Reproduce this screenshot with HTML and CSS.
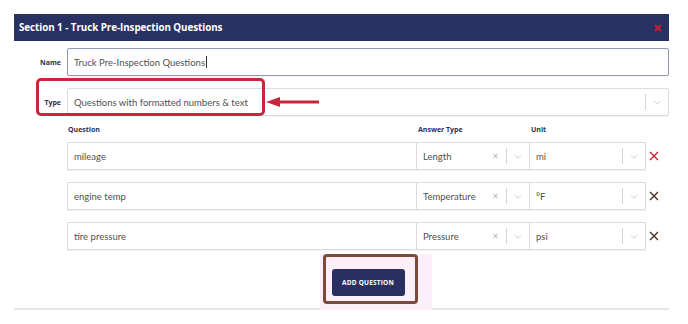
FILE: index.html
```html
<!DOCTYPE html>
<html lang="en">
<head>
    <meta charset="UTF-8">
    <title>Section 1</title>
    <link rel="stylesheet" href="styles.css">
</head>
<body>
    <div class="panel">
        <div class="panel-head">
            <span class="panel-title">Section 1 - Truck Pre-Inspection Questions</span>
            <svg class="panel-close" viewBox="0 0 8 8"><path d="M1 1l6 6M7 1l-6 6" /></svg>
        </div>

        <div class="panel-body">
            <div class="form-row">
                <label class="form-label">Name</label>
                <div class="field field-focus">Truck Pre-Inspection Questions<span class="caret"></span></div>
            </div>

            <div class="form-row type-row">
                <label class="form-label">Type</label>
                <div class="field select">
                    <span class="select-value">Questions with formatted numbers &amp; text</span>
                    <span class="sep"></span>
                    <svg class="chev" viewBox="0 0 10 6"><path d="M1 1l4 4 4-4" /></svg>
                </div>
                <!-- annotation -->
                <div class="mark-red"></div>
                <svg class="mark-arrow" viewBox="0 0 56 12">
                    <path d="M14 6H54" />
                    <path class="head" d="M1 6L15 1V11Z" />
                </svg>
            </div>

            <div class="q-grid q-head">
                <span>Question</span>
                <span>Answer Type</span>
                <span>Unit</span>
                <span></span>
            </div>

            <div class="q-list" id="questions"></div>

            <div class="add-wrap">
                <div class="mark-pink"></div>
                <button class="add-btn">ADD QUESTION</button>
                <div class="mark-brown"></div>
            </div>
        </div>
        <div class="panel-foot"></div>
    </div>

    <script>
        const questions = [
            { q: 'mileage', type: 'Length', unit: 'mi', hot: true },
            { q: 'engine temp', type: 'Temperature', unit: '°F' },
            { q: 'tire pressure', type: 'Pressure', unit: 'psi' }
        ]

        const list = document.getElementById('questions')
        const chev = '<span class="sep"></span><svg class="chev" viewBox="0 0 10 6"><path d="M1 1l4 4 4-4" /></svg>'
        const cross = '<svg viewBox="0 0 10 10"><path d="M1 1l8 8M9 1l-8 8" /></svg>'

        questions.forEach((item) => {
            const row = document.createElement('div')
            row.className = 'q-grid q-row'
            row.innerHTML =
                '<div class="field">' + item.q + '</div>' +
                '<div class="field select"><span class="select-value">' + item.type + '</span><span class="clear">&#x2715;</span>' + chev + '</div>' +
                '<div class="field select"><span class="select-value">' + item.unit + '</span>' + chev + '</div>' +
                '<span class="remove' + (item.hot ? ' remove-hot' : '') + '">' + cross + '</span>'
            list.appendChild(row)
        })
    </script>
</body>
</html>
```

FILE: styles.css
```css
* {
    margin: 0;
    padding: 0;
    box-sizing: border-box;
}

body {
    font-family: 'Lato', 'Open Sans', sans-serif;
    background-color: #fff;
    color: #444;
    width: 688px;
    height: 324px;
    overflow: hidden;
}

/* 面板 */
.panel {
    margin: 14px 0 0 14px;
    width: 655px;
}

.panel-head {
    height: 27px;
    background-color: #283262;
    display: flex;
    align-items: center;
    justify-content: space-between;
    padding: 0 6px 0 5px;
}

.panel-title {
    font-family: 'Open Sans', sans-serif;
    font-weight: 700;
    font-size: 9.8px;
    color: #fff;
    letter-spacing: -0.05px;
}

.panel-close {
    width: 8px;
    height: 8px;
    margin-right: 1px;
    fill: none;
    stroke: #c4203a;
    stroke-width: 2;
}

.panel-body {
    padding: 7px 0 12px 0;
}

/* 表单行 */
.form-row {
    display: flex;
    align-items: center;
    position: relative;
}

.type-row {
    margin-top: 12px;
}

.form-label {
    width: 53px;
    padding-right: 6px;
    text-align: right;
    font-family: 'Open Sans', sans-serif;
    font-weight: 700;
    font-size: 7px;
    color: #2a3058;
}

.field {
    height: 28px;
    flex: 1;
    display: flex;
    align-items: center;
    padding-left: 6px;
    border: 1px solid #dcdcdc;
    border-radius: 2px;
    background-color: #fff;
    font-size: 9.5px;
    color: #505050;
    box-shadow: 0 1px 1px rgba(0, 0, 0, 0.05);
}

.field-focus {
    border-color: #8f98b4;
}

.caret {
    width: 1px;
    height: 12px;
    background-color: #333;
    margin-left: 1px;
}

.select-value {
    flex: 1;
    white-space: nowrap;
}

.sep {
    width: 1px;
    height: 16px;
    background-color: #d6d6d6;
}

.chev {
    width: 22px;
    height: 5px;
    padding: 0 7px;
    fill: none;
    stroke: #c4c4c4;
    stroke-width: 1;
}

.clear {
    font-size: 8px;
    color: #b8b8b8;
    margin-right: 7px;
}

/* 问题表格 */
.q-grid {
    display: grid;
    grid-template-columns: 350px 113px 116px 23px;
    margin-left: 53px;
}

.q-head {
    margin-top: 2px;
    height: 22px;
    align-items: center;
    font-family: 'Open Sans', sans-serif;
    font-weight: 700;
    font-size: 7px;
    color: #2a3058;
}

.q-head span {
    padding-left: 1px;
}

.q-list {
    margin-top: 2px;
    display: flex;
    flex-direction: column;
    gap: 12px;
}

.q-row {
    align-items: center;
}

.q-row .field {
    border-radius: 0;
}

.q-row .field + .field {
    border-left: none;
}

.remove {
    display: flex;
    align-items: center;
    padding-left: 3px;
}

.remove svg {
    width: 10px;
    height: 10px;
    fill: none;
    stroke: #4a3026;
    stroke-width: 1.4;
}

.remove-hot svg {
    stroke: #d21c2c;
}

/* 添加按钮 */
.add-wrap {
    margin-left: 53px;
    margin-top: 19px;
    display: flex;
    justify-content: center;
    position: relative;
}

.add-btn {
    width: 73px;
    height: 27px;
    background-color: #2a2f62;
    border: none;
    border-radius: 3px;
    color: #fff;
    font-family: 'Open Sans', sans-serif;
    font-weight: 700;
    font-size: 6.5px;
    letter-spacing: 0.2px;
    position: relative;
}

.panel-foot {
    height: 2px;
    background-color: #e6e6e6;
}

/* 标注 */
.mark-red {
    position: absolute;
    left: 22px;
    top: -10px;
    width: 229px;
    height: 38px;
    border: 3px solid #c8263a;
    border-radius: 5px;
}

.mark-arrow {
    position: absolute;
    left: 251px;
    top: 8px;
    width: 56px;
    height: 12px;
}

.mark-arrow path {
    stroke: #c8263a;
    stroke-width: 3;
    fill: none;
}

.mark-arrow .head {
    fill: #c8263a;
    stroke: none;
}

.mark-brown {
    position: absolute;
    left: 256px;
    top: -15px;
    width: 95px;
    height: 50px;
    border: 3px solid #7c4a3a;
    border-radius: 4px;
}

.mark-pink {
    position: absolute;
    left: 253px;
    top: -15px;
    width: 112px;
    height: 56px;
    background-color: #fdeffa;
}
```
